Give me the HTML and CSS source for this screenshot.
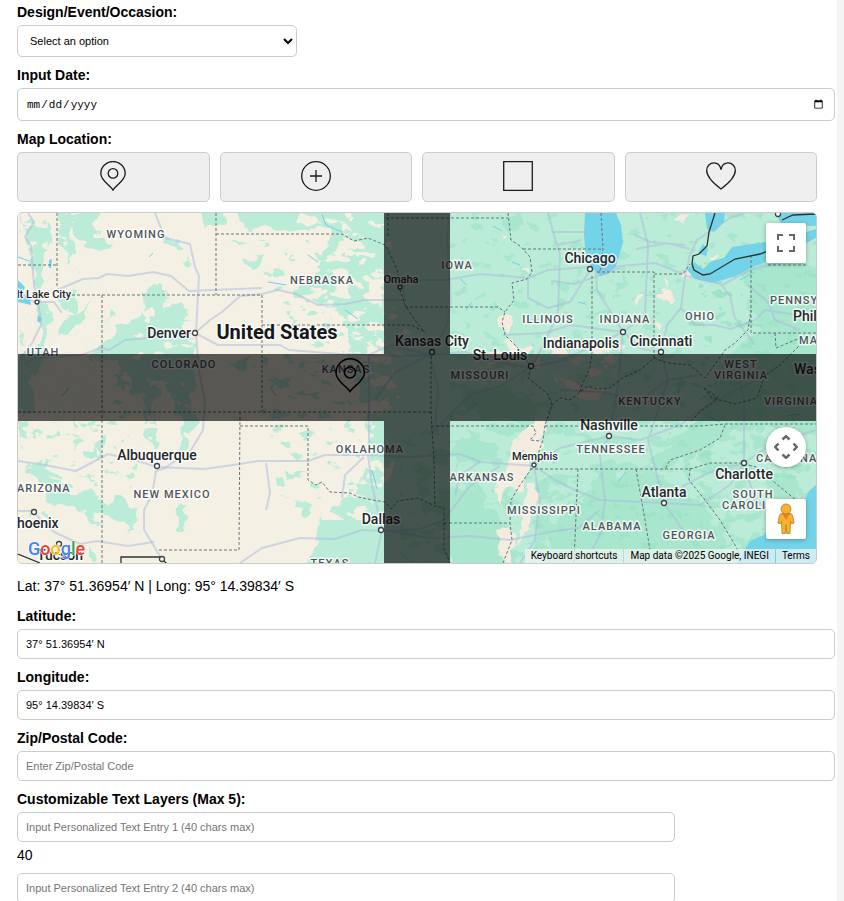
FILE: index.html
```html
<!DOCTYPE html>
<html lang="en">
<head>
<meta charset="utf-8">
<meta name="viewport" content="width=device-width, initial-scale=1">
<title>Map design options</title>
<link rel="stylesheet" href="styles.css">
</head>
<body>
<form class="card">
  <div class="field">
    <label for="occasion">Design/Event/Occasion:</label>
    <select id="occasion" class="control occasion"><option>Select an option</option></select>
  </div>
  <div class="field">
    <label for="date">Input Date:</label>
    <input id="date" class="control date" type="date">
  </div>
  <div class="field">
    <span class="heading">Map Location:</span>
    <div class="shapes">
      <button type="button" class="shape" aria-label="Pin">
        <svg viewBox="0 0 30 30"><path d="M15 29.2C12.400 24.500 2.800 19.500 2.800 12.700a12.200 12.200 0 0 1 24.400 0C27.200 19.500 17.600 24.500 15 29.200Z"/><circle cx="15" cy="12.400" r="4.800"/></svg>
      </button>
      <button type="button" class="shape" aria-label="Circle">
        <svg viewBox="0 0 30 30"><circle cx="15" cy="15" r="14.300"/><path d="M15 9v12M9 15h12"/></svg>
      </button>
      <button type="button" class="shape" aria-label="Square">
        <svg viewBox="0 0 30 30"><path d="M.7.7h28.600v28.600H.7Z"/></svg>
      </button>
      <button type="button" class="shape" aria-label="Heart">
        <svg viewBox="0 0 30 30"><path d="M15 28C9 23.500.7 17 .7 9.500.7 5 4 1.900 8 1.900c3.700 0 6.200 2.600 7 6.600.8-4 3.300-6.600 7-6.600 4 0 7.300 3.100 7.300 7.600C29.300 17 21 23.500 15 28Z"/></svg>
      </button>
    </div>
  </div>

  <div class="map">
    <svg class="canvas" viewBox="18 213 798 350" preserveAspectRatio="xMidYMid slice">
      <defs>
        <filter id="rough" x="-5%" y="-5%" width="110%" height="110%">
          <feTurbulence type="fractalNoise" baseFrequency=".07" numOctaves="2" seed="4"/>
          <feDisplacementMap in="SourceGraphic" scale="18" xChannelSelector="R" yChannelSelector="G"/>
        </filter>
        <filter id="patchy" x="0" y="0" width="100%" height="100%">
          <feTurbulence type="fractalNoise" baseFrequency=".06 .08" numOctaves="3" seed="11"/>
          <feColorMatrix values="0 0 0 0 0  0 0 0 0 0  0 0 0 0 0  16 0 0 0 -8.600"/>
          <feComposite in="SourceGraphic" operator="in"/>
        </filter>
        <filter id="sparse" x="0" y="0" width="100%" height="100%">
          <feTurbulence type="fractalNoise" baseFrequency=".07 .1" numOctaves="3" seed="23"/>
          <feColorMatrix values="0 0 0 0 0  0 0 0 0 0  0 0 0 0 0  16 0 0 0 -10.200"/>
          <feComposite in="SourceGraphic" operator="in"/>
        </filter>
        <filter id="soft" x="-5%" y="-5%" width="110%" height="110%"><feGaussianBlur stdDeviation=".7"/></filter>
      </defs>
      <rect class="land" x="18" y="213" width="798" height="350"/>

      <g class="green" filter="url(#rough)">
        <path d="M322 200 335 235 322 250 322 262 310 275 300 285 292 287 300 298 325 303 345 318 350 340 352 370 362 400 368 430 370 458 360 470 357 485 345 490 340 505 325 512 318 530 315 548 295 575H840V200Z"/>
        <path d="M235 200 232 215 246 230 270 226 290 232 330 228 345 200Z"/>
        <path d="M23 200 26 225 45 222 52 240 43 262 41 300 54 310 48 330 46 350 35 380 32 415 14 412 14 360 38 345 42 325 35 300 34 262 25 250Z"/>
        <path d="M58 200 60 240 66 262 74 250 71 225 84 245 104 252 112 244 92 225 104 210 92 200Z"/>
        <path d="M142 294 150 282 164 287 166 305 180 300 188 315 182 330 196 345 200 368 190 395 196 420 190 450 178 455 180 420 172 395 160 385 152 410 160 440 152 450 144 425 145 400 130 385 122 360 95 365 92 350 110 340 116 325 132 320 145 310Z"/>
        <path d="M98 438 104 432 108 445 100 458 95 448Z"/>
        <path d="M28 465 44 462 52 480 70 490 88 495 108 503 118 497 132 505 135 530 118 522 98 510 78 512 62 508 46 495 38 480 26 474Z"/>
        <path d="M178 508 186 505 184 530 176 530Z"/>
        <path d="M240 262 262 255 252 268ZM230 244 254 239 238 248ZM276 410 288 415 278 421ZM290 448 302 455 296 462ZM298 500 314 508 304 516ZM284 470 298 474 290 480ZM58 296 78 292 76 312 60 308ZM200 208 225 206 221 222 208 228ZM160 235 184 246 178 252 162 242ZM178 260 188 258 190 264ZM18 335 28 332 24 345Z"/>
        <path d="M60 322 88 305 80 325 64 338ZM18 424 30 432 28 440 20 436ZM72 422 82 428 78 432ZM92 545 98 554 92 560ZM230 365 255 358 245 372ZM270 382 290 378 284 388Z"/>
      </g>
      <path class="green" filter="url(#sparse)" d="M18 213H96L90 260 112 305 125 340 200 330 205 420H150L120 530 30 520 18 420ZM240 240H345V340L310 350ZM250 350H360V540L280 500Z"/>

      <g class="deep" filter="url(#rough)">
        <path d="M440 490 478 487 492 510 508 525 500 575H452Z"/>
        <path d="M455 440 480 440 500 446 496 465 470 462 455 470Z"/>
        <path d="M460 392 500 385 545 405 530 425 480 420Z"/>
        <path d="M740 262 780 255 830 270V440L780 425 740 430 700 450 660 470 648 458 690 430 708 400 725 355 760 330Z"/>
        <path d="M600 470 660 475 700 500 725 540 720 575H545L550 525 580 505Z"/>
        <path d="M500 218 520 215 525 226 510 232ZM775 480 800 485 790 510 760 515Z"/>
      </g>
      <path class="deep" filter="url(#sparse)" d="M450 213H816V420H450Z"/>
      <path class="deep" filter="url(#patchy)" d="M450 420H816V563H400V440Z"/>
      <path class="deeper" filter="url(#sparse)" d="M700 260H816V480H660ZM540 470H740V563H520ZM142 290H170L190 330 180 360H150Z"/>

      <path class="land" filter="url(#patchy)" d="M300 213 345 222 384 270 384 330 400 400 380 420 395 460 380 520H320L345 400 335 310 270 285Z"/>
      <path class="land" filter="url(#sparse)" d="M18 213H110V420H18ZM130 300H205V440H130ZM345 213H384L412 330 395 400H345Z"/>
      <g class="valley" filter="url(#rough)">
        <path d="M535 420 549 420 540 445 532 465 520 490 512 488 500 505 495 495 503 470 512 442Z"/>
        <path d="M528 480 541 495 528 530 517 545 522 520ZM498 530 512 525 516 545 502 570ZM504 312 511 320 506 334 500 326ZM505 338 520 346 530 360 518 358ZM523 266 530 268 528 275ZM499 234 508 237 505 242ZM545 342 565 335 560 345Z"/>
        <path d="M658 292 670 290 678 298 672 306 660 300ZM662 280 668 282 664 288ZM680 268 692 276 686 280ZM676 220 688 213 684 225ZM705 256 720 258 712 264ZM655 318 663 325 658 330ZM634 293 640 298 636 304ZM588 348 610 342 604 356Z"/>
      </g>
      <path class="valley" filter="url(#patchy)" d="M545 345H625L610 400H560ZM480 345H540V372H480Z"/>

      <g class="water">
        <path d="M585 213 584 235 586 258 592 268 600 276 608 274 616 266 623 243 621 225 616 213Z"/>
        <path d="M687 270 694 262 703 269 712 261 724 258 732 247 745 245 765 242 790 237 816 229V238L781 256 757 265 736 276 712 283 695 279Z"/>
        <path d="M705 213H725L724 222 714 232 707 229ZM698 253 703 244 708 249 706 256Z"/>
        <path d="M776 213H816V226H782Z"/>
        <path d="M816 485 808 492 803 504 790 511 779 520 770 526 764 535 750 541 741 555 738 563H816Z"/>
        <path d="M18 280 25 287 22 294 30 298 31 305 18 302ZM38 314 42 319 40 323 37 321ZM49 260 52 259 51 268 49 268Z"/>
      </g>
      <path class="stream" d="M322 214 326 225 342 232M308 255 318 262M345 310 358 319M286 285 268 282M460 279 467 285M493 226 502 231M512 262 520 265M585 304 578 302M477 403 466 411M598 347 608 341M706 415 720 422M786 416 800 414M524 450 515 458M372 470 377 489M18 257 29 261M149 257 153 253M270 387 276 396M62 396 69 388M626 472 618 482M795 427 782 434M700 400 712 391M466 310 472 302M740 280 755 272M648 552 640 561"/>

      <g class="road">
        <path d="M28 213 34 222 25 237 31 246 34 285 40 314 41 325 32 343 20 359M57 290 83 279 99 278 107 274 128 276 153 272 171 276 189 291 212 290 262 288M155 213 165 238 190 244 195 267 199 276 196 332 199 372 205 400 203 430 191 450 165 468 156 471 152 495 144 510 144 530 160 556"/>
        <path d="M18 290 34 302 54 302 62 313M25 364 34 358 82 355 100 348 109 350 125 340 160 337 195 333 210 320 222 312 240 296 262 294 278 290 296 294 318 305 345 304 365 300 405 300 402 280 445 280 480 274 528 278 548 270 590 267"/>
        <path d="M195 333 218 345 280 345 289 350 340 354 398 356 430 355 465 352 492 361 531 368M18 461 45 465 76 471 108 454 135 460 157 467 204 469 240 464 258 461 308 461 325 455 364 455 366 455 410 457 460 454 481 462 534 466M18 511 32 511 54 532 80 544 97 541 128 546 154 542"/>
        <path d="M240 563 262 548 300 538 335 539 362 530 385 531 420 529 444 520 469 487 500 466M266 463 270 493 266 510M364 457 345 475 342 498M368 455 372 485 382 530 375 563M382 530 430 538 470 536 510 540 555 531 578 528 600 510"/>
        <path d="M369 455V355L390 345 430 355 447 325 451 300 447 240 450 213M430 355 395 372 382 390 375 400M430 355 438 388 435 430 470 395 500 386 531 367 545 342 558 312 560 255 553 232 548 213"/>
        <path d="M528 278 528 298 548 308 570 302 590 270M503 335 545 333 570 325 623 332 645 315 648 245 640 213M623 332 597 290 596 272 620 266 655 263 683 274M552 285 552 281 575 284 620 268M553 232 590 232M558 245 582 240"/>
        <path d="M531 367 560 361 600 343 623 332 642 349 661 352 667 325 681 308 685 276 690 255 697 240 730 218 745 213M623 332 618 385 609 436 600 455 605 500 600 535 585 563M661 352 668 380 660 405 648 440 664 503 690 540M609 436 640 440 680 425 700 410 740 388 775 370"/>
        <path d="M636 249 667 243 690 249M635 235 650 242 685 245M681 308 695 325 715 325 730 329 755 320 765 310 816 318M685 276 705 278 722 285 730 296 735 318 755 345M722 285 750 270 800 258M748 285 768 302 775 320 800 330"/>
        <path d="M534 466 555 480 575 490 600 500 664 503 700 505 730 485 744 463 744 400 735 360M534 466 540 500 535 540 520 563M534 466 560 448 609 436M744 463 770 445 816 430M664 503 685 485 710 472 744 463 755 500 775 515M560 390 600 392 640 400 668 380 700 375M480 462 460 475 455 495"/>
      </g>

      <g class="border">
        <path d="M57 213V288M18 265H57M72 295H262V412M216 213V295M216 234H342L354 241 368 238 385 245 392 258 398 272 400 290 405 305 415 320 425 333M388 213V238M386 218H508M405 307H498L505 312M262 325H411L425 332M102 295V563M18 412H431M431 356V412L434 460 435 506M240 412 239 550H158M240 426H308V480L316 485 322 482 330 492 350 493 358 497 373 500 385 502 391 509 398 501 418 498 435 506 444 508V548L450 563M444 523H510M431 426H533L536 433 530 440 540 441"/>
        <path d="M508 213 511 240 520 246 530 257 532 272 527 279 512 283 514 300 505 312 502 322 505 335 520 350 531 367 528 378 548 394 552 405 545 425 543 440 534 465 520 485 511 500 510 523 512 540 503 563M523 249H603M601 213 603 249 600 271M592 276V352L590 367 582 385 580 392M597 272H654V360M654 274H683L690 264"/>
        <path d="M552 405 560 398 570 400 580 392 588 386 597 389 610 388 622 378 640 370 654 358 668 363 690 365 705 378 718 360 725 350 735 343 748 330 751 310M751 255V333H816M768 265H806M775 333 776 348 800 338M704 388 712 398 735 404 757 398 765 375 780 365 800 345M704 388 718 398 700 412 690 422M545 426H700L725 424H816M725 425 720 438 700 450 670 460 665 469M530 469H690L710 463H740L756 467 796 500M578 469 574 563M636 469 645 520 650 550M690 468 689 480 705 500 720 520 735 545 740 555"/>
      </g>
      <path class="frontier" d="M715 213 709 232 707 246 699 254 693 256 692 264 694 270 703 275 710 274 735 259 760 254 790 243M782 220 793 215 816 214M18 554 40 563M121 563V557H160L167 564"/>

      <g class="dots">
        <circle cx="37" cy="302" r="2"/><circle cx="195" cy="333" r="2.500"/><circle cx="400" cy="287" r="2"/><circle cx="432" cy="352" r="2.500"/><circle cx="590" cy="269" r="2.500"/><circle cx="623" cy="332" r="2.500"/><circle cx="531" cy="366" r="2.500"/><circle cx="661" cy="352" r="2.500"/><circle cx="157" cy="466" r="2.500"/><circle cx="34" cy="512" r="2.500"/><circle cx="59" cy="544" r="2.500"/><circle cx="381" cy="530" r="2.500"/><circle cx="609" cy="436" r="2.500"/><circle cx="534" cy="465" r="2"/><circle cx="664" cy="503" r="2.500"/><circle cx="744" cy="463" r="2.500"/><circle cx="778" cy="214" r="2.500"/><circle cx="162" cy="559" r="2.500"/>
      </g>
      <g class="state">
        <text x="136" y="238">WYOMING</text><text x="43" y="356">UTAH</text><text x="184" y="368">COLORADO</text><text x="322" y="284">NEBRASKA</text><text x="346" y="373">KANSAS</text><text x="457" y="269">IOWA</text><text x="548" y="323">ILLINOIS</text><text x="625" y="323">INDIANA</text><text x="480" y="379">MISSOURI</text><text x="700" y="320">OHIO</text><text x="741" y="368">WEST</text><text x="741" y="379">VIRGINIA</text><text x="650" y="405">KENTUCKY</text><text x="172" y="498">NEW MEXICO</text><text x="370" y="453">OKLAHOMA</text><text x="330" y="567">TEXAS</text><text x="611" y="453">TENNESSEE</text><text x="482" y="481">ARKANSAS</text><text x="544" y="514">MISSISSIPPI</text><text x="612" y="530">ALABAMA</text><text x="689" y="539">GEORGIA</text><text x="753" y="498">SOUTH</text>
        <g class="from"><text x="17" y="492">ARIZONA</text><text x="770" y="304">PENNSY</text><text x="799" y="344">MA</text><text x="764" y="405">VIRGINIA</text><text x="722" y="509">CAROLI</text><text x="756" y="462">CAROLINA</text></g>
      </g>
      <g class="city">
        <text x="169" y="338">Denver</text><text x="432" y="346">Kansas City</text><text x="590" y="263">Chicago</text><text x="581" y="348">Indianapolis</text><text x="500" y="360">St. Louis</text><text x="661" y="346">Cincinnati</text><text x="157" y="460">Albuquerque</text><text x="60" y="560">Tucson</text><text x="381" y="524">Dallas</text><text x="609" y="430">Nashville</text><text x="664" y="497">Atlanta</text><text x="744" y="479">Charlotte</text>
        <g class="from"><text x="17" y="528">hoenix</text><text x="793" y="321">Phil</text><text x="794" y="374">Was</text></g>
        <g class="small"><text x="44" y="298">lt Lake City</text><text x="401" y="283">Omaha</text><text x="535" y="460">Memphis</text></g>
      </g>
      <text class="country" x="277" y="339">United States</text>

      <path class="cross" filter="url(#soft)" d="M384 203H450V354H826V421H450V573H384V421H8V354H384Z"/>
      <g class="marker"><path d="M350 391.500C347 386.500 336 381 336 373a14.200 14.200 0 0 1 28.400 0C364.400 381 353 386.500 350 391.500Z"/><circle cx="350" cy="372.500" r="5.500"/></g>
      <text class="logo" x="28" y="555"><tspan class="g-blue">G</tspan><tspan class="g-red">o</tspan><tspan class="g-yellow">o</tspan><tspan class="g-blue">g</tspan><tspan class="g-green">l</tspan><tspan class="g-red">e</tspan></text>
    </svg>
    <button type="button" class="tool fullscreen" aria-label="Toggle fullscreen view">
      <svg viewBox="0 0 18 18"><path d="M0 0v6h2V2h4V0H0Zm16 0h-4v2h4v4h2V0h-2Zm0 16h-4v2h6v-6h-2v4ZM2 12H0v6h6v-2H2v-4Z"/></svg>
    </button>
    <button type="button" class="tool camera" aria-label="Map camera controls">
      <svg viewBox="0 0 24 24"><path class="chevrons" d="m8.500 4.500 3.500-3.300 3.500 3.300M8.500 19.500l3.500 3.300 3.500-3.300M4.500 8.500 1.200 12l3.300 3.500M19.500 8.500l3.300 3.500-3.300 3.500"/></svg>
    </button>
    <button type="button" class="tool pegman" aria-label="Street View">
      <svg viewBox="0 0 18 32"><path class="body" d="M5 10.500h8c1.500 0 2.300 1 2.500 2.200L17.200 20l-2.600.8-1.100-2.600-.5 12.300H9.700L9.300 22h-.6l-.4 8.500H5L4.500 18.200l-1.100 2.600L.8 20l1.700-7.300C2.700 11.500 3.500 10.500 5 10.500Z"/><path class="scarf" d="m4.500 10.500 4.500 6 4.500-6Z"/><circle class="body" cx="9" cy="6" r="5"/></svg>
    </button>
    <div class="credits">
      <button type="button">Keyboard shortcuts</button>
      <span>Map data ©2025 Google, INEGI</span>
      <a href="#">Terms</a>
    </div>
  </div>

  <p class="coords">Lat: 37° 51.36954′ N | Long: 95° 14.39834′ S</p>

  <div class="field">
    <label for="lat">Latitude:</label>
    <input id="lat" class="control" type="text" value="37° 51.36954′ N">
  </div>
  <div class="field">
    <label for="long">Longitude:</label>
    <input id="long" class="control" type="text" value="95° 14.39834′ S">
  </div>
  <div class="field">
    <label for="zip">Zip/Postal Code:</label>
    <input id="zip" class="control" type="text" placeholder="Enter Zip/Postal Code">
  </div>
  <div class="layer">
    <label for="text1">Customizable Text Layers (Max 5):</label>
    <input id="text1" class="control entry" type="text" maxlength="40" placeholder="Input Personalized Text Entry 1 (40 chars max)">
    <output class="count" for="text1">40</output>
  </div>
  <div class="layer">
    <input id="text2" class="control entry" type="text" maxlength="40" placeholder="Input Personalized Text Entry 2 (40 chars max)" aria-label="Text entry 2">
  </div>
</form>
</body>
</html>
```
FILE: styles.css
```css
html {
  height: 100%;
  overflow: hidden;
  background: #f4f4f4;
}

body {
  height: 100%;
  margin: 0 7px 0 0;
  font: 14px/16px "Liberation Sans", Arial, sans-serif;
  color: #000;
}

.card {
  min-height: 100%;
  box-sizing: border-box;
  padding: 4px 20px 20px 17px;
  background: #fff;
  box-shadow: 0 0 10px rgba(0, 0, 0, 0.1);
}

.field,
.layer {
  margin-bottom: 10px;
}

label,
.heading {
  display: block;
  margin-bottom: 5px;
  font-weight: bold;
}

/* Padding and border sit outside the width, so full-width fields run past the map. */
.control {
  display: block;
  box-sizing: content-box;
  width: 100%;
  height: 12px;
  margin: 0;
  padding: 8px;
  border: 1px solid #ccc;
  border-radius: 5px;
  background: #fff;
  color: #000;
  font: 11px "Liberation Sans", Arial, sans-serif;
}

.control::placeholder {
  color: #757575;
}

.occasion {
  box-sizing: border-box;
  width: 35%;
  height: 32px;
}

.date {
  height: 15px;
  font-family: "Liberation Mono", "Courier New", monospace;
}

.entry {
  width: 80%;
}

.count {
  display: block;
  margin-top: 5px;
}

.shapes {
  display: grid;
  grid-template-columns: repeat(4, 1fr);
  gap: 10px;
}

.shape {
  display: flex;
  align-items: center;
  justify-content: center;
  height: 50px;
  padding: 0 0 2px;
  border: 1px solid #ccc;
  border-radius: 5px;
  background: #efefef;
}

.shape svg {
  width: 30px;
  height: 30px;
  fill: none;
  stroke: #1c1c1c;
  stroke-width: 1.3;
}

.map {
  position: relative;
  height: 350px;
  border: 1px solid #ccc;
  border-radius: 5px;
  overflow: hidden;
  font-family: Roboto, Arial, sans-serif;
}

.canvas {
  display: block;
  width: 100%;
  height: 100%;
}

.land { fill: #f5f0e4; }
.valley { fill: #f3ecdf; }
.green { fill: #bbecd8; }
.deep { fill: #a8e6cd; }
.deeper { fill: #96dfc0; fill-opacity: 0.5; }
.water { fill: #73d3e9; }

.stream,
.road,
.border,
.frontier {
  fill: none;
}

.stream { stroke: #73cfe6; }
.road { stroke: #a9b9dc; stroke-opacity: 0.5; stroke-width: 2; stroke-linejoin: round; }
.border { stroke: #68777a; stroke-dasharray: 3 2; }
.frontier { stroke: #2c3335; stroke-width: 1.3; }
.dots { fill: #fff; stroke: #3c4043; stroke-width: 1.3; }

.state,
.city,
.country {
  text-anchor: middle;
  paint-order: stroke;
  stroke: #fff;
  stroke-opacity: 0.75;
  stroke-width: 3;
  stroke-linejoin: round;
}

.state {
  fill: #50565b;
  font-size: 11px;
  font-weight: 500;
  letter-spacing: 1px;
}

.city { fill: #24282b; font-size: 14px; font-weight: 500; }
.small { font-size: 11px; }
.from { text-anchor: start; }
.country { fill: #16191b; font-size: 20px; font-weight: 700; }
.cross { fill: #000; fill-opacity: 0.64; }
.marker { fill: none; stroke: #000; stroke-width: 1.5; }

.logo {
  font: 500 18px Roboto, Arial, sans-serif;
  paint-order: stroke;
  stroke: #fff;
  stroke-width: 1;
}

.g-blue { fill: #4285f4; }
.g-red { fill: #ea4335; }
.g-yellow { fill: #fbbc04; }
.g-green { fill: #34a853; }

.tool {
  position: absolute;
  right: 10px;
  display: flex;
  align-items: center;
  justify-content: center;
  width: 40px;
  height: 40px;
  padding: 0;
  border: 0;
  border-radius: 2px;
  background: #fff;
  box-shadow: 0 1px 4px rgba(0, 0, 0, 0.3);
}

.fullscreen { top: 10px; }
.camera { bottom: 96px; border-radius: 50%; }
.pegman { bottom: 24px; }
.fullscreen svg { width: 18px; fill: #666; }
.camera svg { width: 24px; }
.pegman svg { width: 18px; }
.chevrons { fill: none; stroke: #666; stroke-width: 2.5; }
.body { fill: #fbb12b; stroke: #a8822f; stroke-width: 0.8; }
.scarf { fill: #e8812c; }

.credits {
  position: absolute;
  right: 0;
  bottom: 0;
  display: flex;
  gap: 1px;
  font-size: 10px;
  line-height: 14px;
}

.credits > * {
  padding: 0 6px;
  border: 0;
  background: rgba(245, 245, 245, 0.7);
  color: #000;
  font: inherit;
  text-decoration: none;
}

.coords {
  margin: 14px 0;
}
```
